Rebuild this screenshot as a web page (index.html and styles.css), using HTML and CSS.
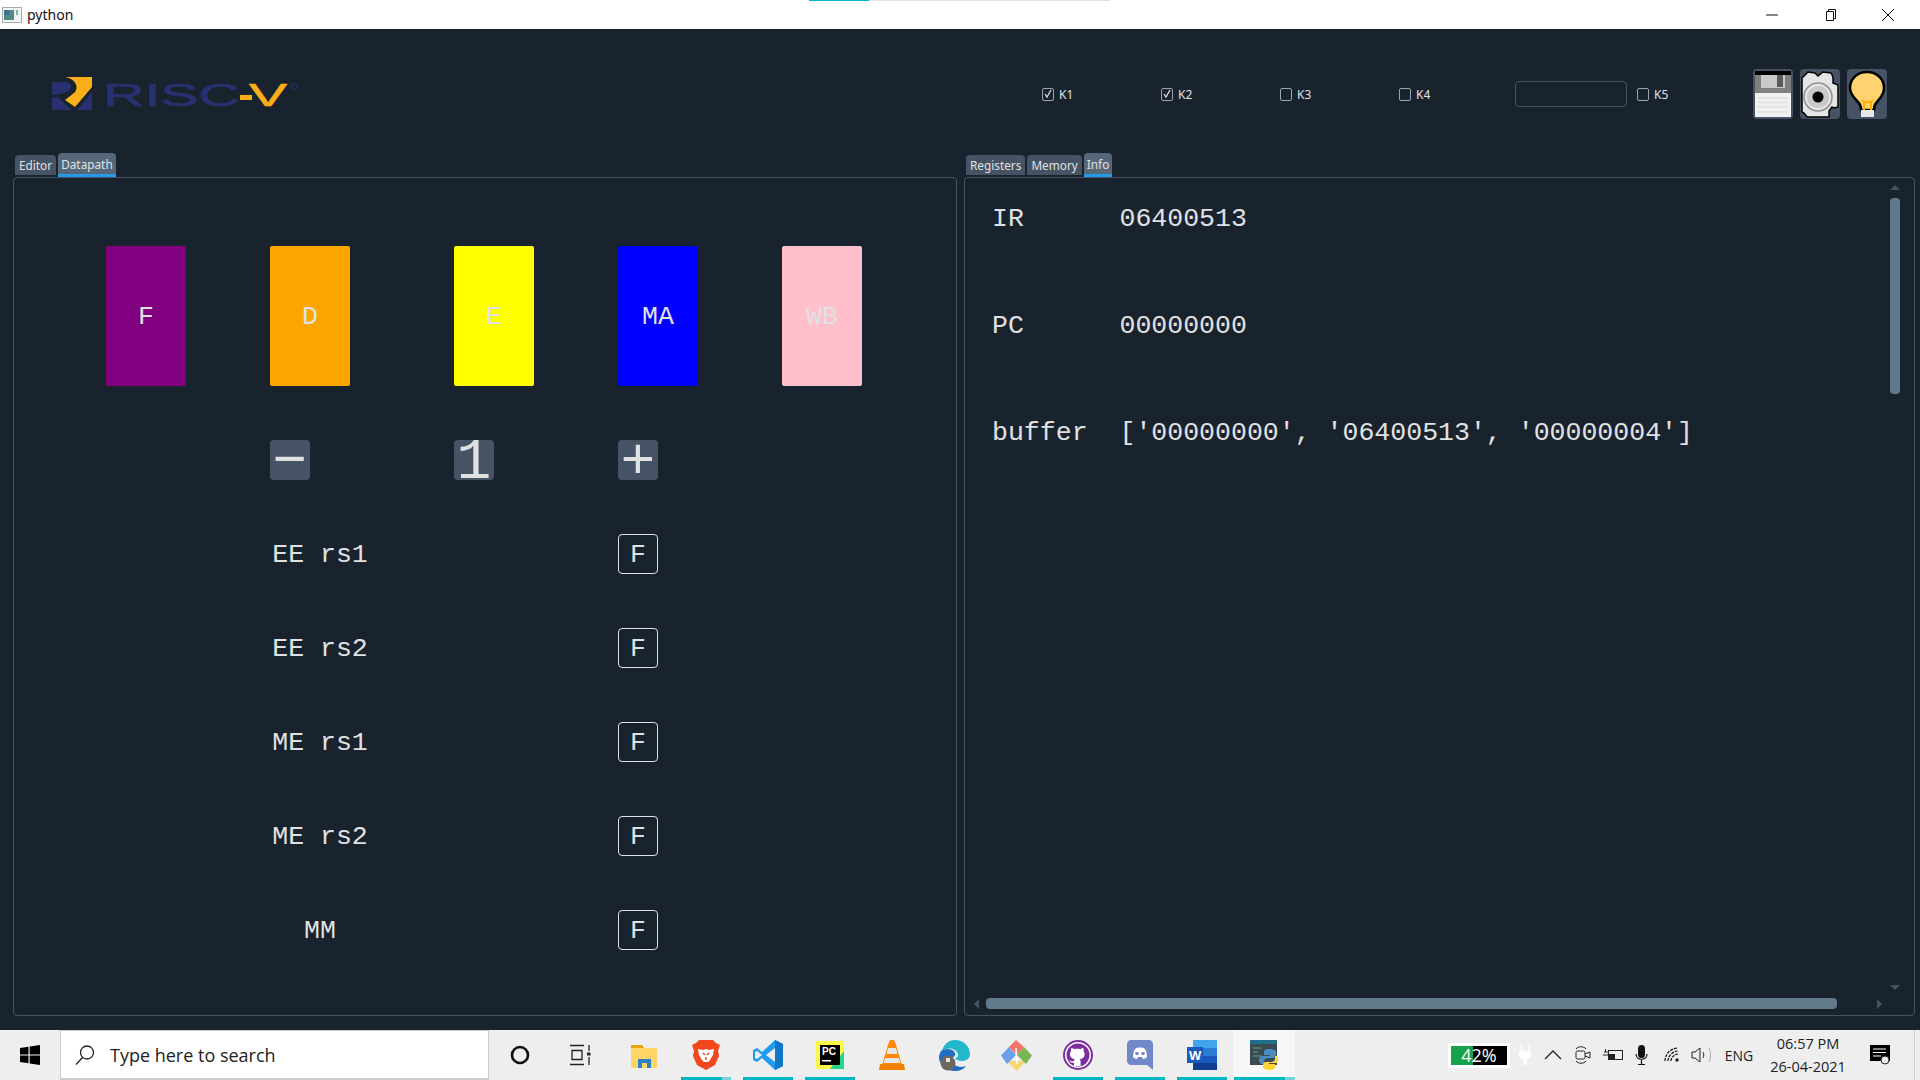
FILE: index.html
```html
<!DOCTYPE html>
<html lang="en">
<head>
    <meta charset="UTF-8">
    <title>python</title>
    <link rel="stylesheet" href="styles.css">
</head>
<body>
    <div class="titlebar">
        <div class="launch-strip"></div>
        <svg class="app-icon" width="20" height="16" viewBox="0 0 20 16">
            <rect x="0.5" y="0.5" width="19" height="15" fill="#f4f4f4" stroke="#a9a9a9"/>
            <rect x="2" y="3" width="10" height="10" fill="#4f8a86"/>
            <rect x="2" y="3" width="5" height="5" fill="#3c6f8f"/>
            <rect x="14" y="3" width="2" height="5" fill="#7db6a5"/>
        </svg>
        <span class="app-name">python</span>
        <div class="win-controls">
            <svg width="14" height="14" viewBox="0 0 14 14"><path d="M1 7h12" stroke="#111" fill="none"/></svg>
            <svg width="14" height="14" viewBox="0 0 14 14"><path d="M3.5 3.5h7v9h-7zM5.5 3.5v-2h7v9h-2" stroke="#111" fill="none"/></svg>
            <svg width="14" height="14" viewBox="0 0 14 14"><path d="M1 1l12 12M13 1L1 13" stroke="#111" fill="none"/></svg>
        </div>
    </div>

    <main class="app">
        <header class="topbar">
            <svg class="logo" width="250" height="40" viewBox="0 0 250 40">
                <g transform="translate(0 3)">
                    <path d="M0 5h14c6 0 7 8 1 10l-6 2-9 1z" fill="#27316f"/>
                    <path d="M0 21l6-1 13 13H0z" fill="#27316f"/>
                    <path d="M40 15v18H25z" fill="#27316f"/>
                    <path d="M13 0h27v10L23 30l-10-7 9-7c5-4 3-14-9-16z" fill="#f9ae1a"/>
                    <text class="logo-text" x="51" y="29" textLength="137" lengthAdjust="spacingAndGlyphs" fill="#27316f" stroke="#27316f">RISC</text>
                    <rect x="188" y="18" width="12" height="5" fill="#f9ae1a"/>
                    <text class="logo-text" x="197" y="29" textLength="38" lengthAdjust="spacingAndGlyphs" fill="#f9ae1a" stroke="#f9ae1a">V</text>
                    <circle cx="242" cy="9.5" r="3" fill="none" stroke="#27316f"/>
                </g>
            </svg>

            <div class="checks">
                <label class="check"><span class="box"><svg width="10" height="10" viewBox="0 0 10 10"><path d="M2 5l2 3 4-7" fill="none" stroke="#e0e1e3" stroke-width="1.3"/></svg></span>K1</label>
                <label class="check"><span class="box"><svg width="10" height="10" viewBox="0 0 10 10"><path d="M2 5l2 3 4-7" fill="none" stroke="#e0e1e3" stroke-width="1.3"/></svg></span>K2</label>
                <label class="check"><span class="box"></span>K3</label>
                <label class="check"><span class="box"></span>K4</label>
                <input class="field" type="text">
                <label class="check"><span class="box"></span>K5</label>
            </div>

            <div class="tools">
                <button class="tool">
                    <svg width="40" height="50" viewBox="0 0 40 50">
                        <rect x="2" y="2" width="36" height="46" fill="#808080"/>
                        <rect x="2" y="2" width="36" height="4" fill="#000"/>
                        <rect x="8" y="6" width="24" height="13" fill="#c9c9c9"/>
                        <rect x="24" y="6" width="6" height="12" fill="#5a5a5a"/>
                        <rect x="2" y="24" width="36" height="24" fill="#f1f1f1"/>
                        <path d="M5 29h30M5 33.500h30M5 38h30M5 43h30" stroke="#dedede" stroke-width="1.500"/>
                    </svg>
                </button>
                <button class="tool">
                    <svg width="40" height="50" viewBox="0 0 40 50">
                        <path d="M2 9l6-6 7 1 3 3 5-4 8 1 2 4v6l5 2v22l-4 1-2-1-3 4v6H7l-3-4-2-1z" fill="#e5e5e5" stroke="#000" stroke-width="1.500"/>
                        <circle cx="18" cy="28" r="14" fill="#e5e5e5" stroke="#8f8f8f" stroke-width="1.500"/>
                        <circle cx="18" cy="28" r="11" fill="#c9c9c9"/>
                        <circle cx="18" cy="28" r="5.500" fill="#000"/>
                    </svg>
                </button>
                <button class="tool">
                    <svg width="40" height="50" viewBox="0 0 40 50">
                        <path d="M20 3c10 0 17 7 17 16 0 7-4 10-7 14-2 2-3 4-3 8H14c0-4-1-6-3-8-3-4-8-7-8-14C3 10 10 3 20 3z" fill="#ffd470" stroke="#000" stroke-width="2.500"/>
                        <path d="M15 31l2 2h7l2-2M17 33v8M24 33v8" fill="none" stroke="#ffb000" stroke-width="2"/>
                        <rect x="14" y="41" width="13" height="7" fill="#e8e8e8"/>
                    </svg>
                </button>
            </div>
        </header>

        <div class="workspace">
            <section class="column column-left">
                <div class="tabs">
                    <div class="tab">Editor</div>
                    <div class="tab active">Datapath</div>
                </div>
                <div class="pane datapath">
                    <div class="stage stage-f col-1">F</div>
                    <div class="stage stage-d col-2">D</div>
                    <div class="stage stage-e col-3">E</div>
                    <div class="stage stage-ma col-4">MA</div>
                    <div class="stage stage-wb col-5">WB</div>

                    <button class="step col-2">&minus;</button>
                    <button class="step col-3">1</button>
                    <button class="step col-4">+</button>

                    <div class="fwd-label col-2">EE rs1</div>
                    <button class="fwd col-4">F</button>
                    <div class="fwd-label col-2">EE rs2</div>
                    <button class="fwd col-4">F</button>
                    <div class="fwd-label col-2">ME rs1</div>
                    <button class="fwd col-4">F</button>
                    <div class="fwd-label col-2">ME rs2</div>
                    <button class="fwd col-4">F</button>
                    <div class="fwd-label col-2">MM</div>
                    <button class="fwd col-4">F</button>
                </div>
            </section>

            <section class="column column-right">
                <div class="tabs">
                    <div class="tab">Registers</div>
                    <div class="tab">Memory</div>
                    <div class="tab active">Info</div>
                </div>
                <div class="pane info">
                    <div class="info-line">IR      06400513</div>
                    <div class="info-line">PC      00000000</div>
                    <div class="info-line">buffer  ['00000000', '06400513', '00000004']</div>

                    <div class="arrow arrow-up"></div>
                    <div class="thumb-v"></div>
                    <div class="arrow arrow-down"></div>
                    <div class="arrow arrow-left"></div>
                    <div class="thumb-h"></div>
                    <div class="arrow arrow-right"></div>
                </div>
            </section>
        </div>
    </main>

    <footer class="taskbar">
        <div class="start">
            <svg width="20" height="20" viewBox="0 0 20 20"><path d="M0 3l8.500-1.300v7.800H0zM9.700 1.500L20 0v9.500H9.700zM0 10.500h8.500v7.800L0 17zM9.700 10.500H20V20L9.700 18.500z" fill="#000"/></svg>
        </div>
        <div class="search">
            <svg width="20" height="22" viewBox="0 0 20 22"><circle cx="12" cy="8.500" r="6.500" fill="none" stroke="#222" stroke-width="1.300"/><path d="M7.500 13.500L1 20.500" stroke="#222" stroke-width="1.300"/></svg>
            <span>Type here to search</span>
        </div>

        <div class="tile"><svg width="20" height="20" viewBox="0 0 20 20"><circle cx="10" cy="10" r="8" fill="none" stroke="#111" stroke-width="2.600"/></svg></div>
        <div class="tile"><svg width="26" height="22" viewBox="0 0 26 22"><path d="M1 1.500h14M1 20.500h14M3 6.500h10v9H3zM20 1v6M20 13v8" fill="none" stroke="#222" stroke-width="1.300"/><rect x="18" y="8.500" width="3.500" height="3" fill="#222"/></svg></div>
        <div class="tile">
            <svg width="28" height="28" viewBox="0 0 28 28">
                <path d="M1 4h11l2 3h13v20H1z" fill="#ffd566"/>
                <path d="M1 4h11l2 3H1z" fill="#e5a505"/>
                <path d="M8 27V18h13v9h-4v-5h-5v5z" fill="#2c82c9"/>
            </svg>
        </div>
        <div class="tile running multi">
            <svg width="28" height="30" viewBox="0 0 28 30">
                <path d="M7 0h14l3 3 4 2-2 6 1 5-4 9-9 5-9-5-4-9 1-5-2-6 4-2z" fill="#f1471d"/>
                <path d="M6 9l5 1 3-1 3 1 5-1-1 6-3 5-2 2h-4l-2-2-3-5z" fill="#fff"/>
                <path d="M11 13l2 2M17 13l-2 2M14 17v3" stroke="#f1471d" stroke-width="1.500"/>
            </svg>
        </div>
        <div class="tile running">
            <svg width="30" height="30" viewBox="0 0 30 30">
                <path d="M22 0l8 4v22l-8 4-13-12-5 4-4-2V10l4-2 5 4z" fill="#1f9cf0"/>
                <path d="M22 8v14l-9-7z" fill="#eeeeee"/>
                <path d="M22 0v30l8-4V4z" fill="#0e78c6"/>
                <path d="M4 11l5 4-5 4-2-1v-6z" fill="#eeeeee"/>
            </svg>
        </div>
        <div class="tile running">
            <svg width="28" height="28" viewBox="0 0 28 28">
                <path d="M0 0h28v28H0z" fill="#21d789"/>
                <path d="M0 0h28v10L14 28H0z" fill="#fcf84a"/>
                <rect x="4" y="4" width="20" height="20" fill="#000"/>
                <text class="pc-text" x="6" y="14" fill="#fff">PC</text>
                <rect x="6" y="19" width="9" height="1.500" fill="#fff"/>
            </svg>
        </div>
        <div class="tile">
            <svg width="26" height="30" viewBox="0 0 26 30">
                <path d="M9 5L11 0h4l2 5 6 20H3z" fill="#ff8800"/>
                <path d="M9 8h8l1.500 6h-11zM6 18h14l1.500 5h-17z" fill="#e6e6e6"/>
                <path d="M1 24h24l1 6H0z" fill="#f08000"/>
            </svg>
        </div>
        <div class="tile">
            <svg width="31" height="31" viewBox="0 0 31 31">
                <path d="M3 11C5 3 11 0 16 0c9 0 15 7 15 14 0 4-3 7-8 7-3 0-6-1-7-3 3 0 4-3 2-6-3-4-9-5-15-1z" fill="#21b8c9"/>
                <path d="M2 11c4-3 12-3 14 2 1 2-1 4-3 5-1 5 4 9 9 9 2 0 4-1 5-1-3 4-7 5-11 5C7 31 0 25 0 17c0-2 1-4 2-6z" fill="#1d6fc4"/>
                <circle cx="9" cy="23" r="7.500" fill="#6e675f"/>
                <rect x="7" y="18" width="4" height="4" fill="#e8e3d6"/>
            </svg>
        </div>
        <div class="tile">
            <svg width="31" height="31" viewBox="0 0 31 31">
                <path d="M15.500 31L6 21h19z" fill="#f7d774"/>
                <path d="M0 15.500L8 7l7 8-9 9z" fill="#6d9eeb"/>
                <path d="M31 15.500L23 7l-7 8 9 9z" fill="#76b852"/>
                <path d="M15 0l8 7-7 8-8-8z" fill="#f0766b"/>
                <path d="M15 8l1 16" stroke="#fff" stroke-width="1.500"/>
            </svg>
        </div>
        <div class="tile running">
            <svg width="30" height="30" viewBox="0 0 30 30">
                <circle cx="15" cy="15" r="14" fill="#fff" stroke="#7b2f9e" stroke-width="2"/>
                <circle cx="15" cy="15" r="11.500" fill="#7b2f9e"/>
                <path d="M11 26v-3c-3 0-4-1-5-3 2 1 3 2 5 1 0-1 0-1 1-2-3 0-5-2-5-5 0-1 .500-2 1-3-.200-1 0-2 .300-3 1 0 2 .500 3 1.200 2-.500 4-.500 6 0 1-.700 2-1.200 3-1.200.300 1 .500 2 .300 3 .500 1 1 2 1 3 0 3-2 5-5 5 1 1 1 2 1 3v4z" fill="#fff"/>
            </svg>
        </div>
        <div class="tile running">
            <svg width="26" height="30" viewBox="0 0 26 30">
                <path d="M4 0h18c2 0 4 2 4 4v26l-6-5H4c-2 0-4-2-4-4V4c0-2 2-4 4-4z" fill="#7289c9"/>
                <path d="M6 17c0-4 1-7 3-9l3-.500h2l3 .500c2 2 3 5 3 9-1 1-3 2-4 2l-1-2h-4l-1 2c-1 0-3-1-4-2z" fill="#fff"/>
                <circle cx="10" cy="13.500" r="1.800" fill="#7289c9"/>
                <circle cx="16" cy="13.500" r="1.800" fill="#7289c9"/>
            </svg>
        </div>
        <div class="tile running">
            <svg width="30" height="30" viewBox="0 0 30 30">
                <rect x="6" y="0" width="24" height="8" fill="#41a5ee"/>
                <rect x="6" y="8" width="24" height="8" fill="#2b7cd3"/>
                <rect x="6" y="16" width="24" height="7" fill="#185abd"/>
                <rect x="6" y="23" width="24" height="7" fill="#103f91"/>
                <rect x="0" y="7" width="16" height="16" fill="#185abd"/>
                <text class="word-text" x="2" y="20" fill="#fff">W</text>
            </svg>
        </div>
        <div class="tile running current">
            <svg width="28" height="30" viewBox="0 0 28 30">
                <rect x="0" y="0" width="27" height="25" fill="#3b4a54"/>
                <rect x="0" y="0" width="27" height="4" fill="#1f6f8b"/>
                <path d="M3 8h8M3 12h5M3 16h9" stroke="#52b36b" stroke-width="1"/>
                <path d="M19 9c-4 0-5 1-5 3v3h6v1h-8c-2 0-3 2-3 4s1 4 3 4h2v-3c0-2 2-3 4-3h5c2 0 3-1 3-3v-3c0-2-3-3-7-3z" fill="#4b8bbe"/>
                <path d="M20 30c4 0 5-1 5-3v-3h-6v-1h8c1 0 1-2 1-4s-1-3-1-3h-2v3c0 2-2 3-4 3h-5c-2 0-3 1-3 3v2c0 2 3 3 7 3z" fill="#ffd43b"/>
            </svg>
        </div>

        <div class="tray">
            <div class="battery-meter"><span class="charge"></span><span class="charge-text">42%</span></div>
            <div class="tray-item w-29"><svg width="12" height="20" viewBox="0 0 12 20"><path d="M2 0v6M10 0v6M0 6h12v5l-3 3H7v6H5v-6H3l-3-3z" fill="#fff" stroke="#fff" stroke-width="1"/></svg></div>
            <div class="tray-item w-28"><svg width="18" height="10" viewBox="0 0 18 10"><path d="M1 9l8-8 8 8" fill="none" stroke="#222" stroke-width="1.300"/></svg></div>
            <div class="tray-item w-31"><svg width="16" height="20" viewBox="0 0 16 20"><rect x="1" y="6" width="9" height="8" rx="1.500" fill="none" stroke="#222"/><path d="M10 9l5-2v6l-5-2M1 4c2-3 8-3 10 0M1 16c2 3 8 3 10 0" fill="none" stroke="#222"/></svg></div>
            <div class="tray-item w-29"><svg width="20" height="14" viewBox="0 0 20 14"><rect x="5.500" y="2.500" width="14" height="9" fill="none" stroke="#222"/><rect x="6" y="6" width="6" height="5" fill="#222"/><path d="M1 4h4M2.500 1v3M0 7h5" stroke="#222"/></svg></div>
            <div class="tray-item w-29"><svg width="13" height="20" viewBox="0 0 13 20"><rect x="3" y="0" width="7" height="13" rx="3.500" fill="#111"/><path d="M1 9c0 7 11 7 11 0M6.500 15v4M3 19.500h7" fill="none" stroke="#111" stroke-width="1.200"/></svg></div>
            <div class="tray-item w-31"><svg width="16" height="16" viewBox="0 0 16 16"><path d="M1 14C1 7 7 1 14 1M4 14c0-5 5-10 10-10M7 14c0-3 3-7 7-7" fill="none" stroke="#111" stroke-width="1.200" stroke-dasharray="3 1"/><circle cx="13" cy="13" r="1.700" fill="#222"/></svg></div>
            <div class="tray-item w-27"><svg width="20" height="16" viewBox="0 0 20 16"><path d="M1 5h3l5-4v14l-5-4H1z" fill="none" stroke="#222"/><path d="M12 5c1 2 1 4 0 6" fill="none" stroke="#222"/><path d="M18 1c2 4 2 10 0 14" fill="none" stroke="#aaa"/></svg></div>
            <div class="lang">ENG</div>
            <div class="clock"><span>06:57 PM</span><span>26-04-2021</span></div>
            <div class="tray-item w-56"><svg width="22" height="20" viewBox="0 0 22 20"><path d="M1 0h20v16H1z" fill="#000"/><path d="M4 4h13M4 7.500h13M4 11h8" stroke="#fff"/><circle cx="16" cy="15" r="4" fill="#eee" stroke="#222"/></svg></div>
            <div class="tray-edge"></div>
        </div>
    </footer>
</body>
</html>
```

FILE: styles.css
```css
/* General Styles */
* {
    box-sizing: border-box;
}

body {
    margin: 0;
    width: 1920px;
    height: 1080px;
    display: flex;
    flex-direction: column;
    overflow: hidden;
    background-color: #19232d;
    color: #e0e1e3;
    font-family: 'Noto Sans', sans-serif;
}

button {
    padding: 0;
    border: none;
    background: none;
    color: inherit;
    font: inherit;
}

/* Title bar */
.titlebar {
    position: relative;
    height: 29px;
    flex-shrink: 0;
    display: flex;
    align-items: center;
    background-color: #fff;
    color: #111;
}

.launch-strip {
    position: absolute;
    top: 0;
    left: 809px;
    width: 301px;
    height: 1px;
    background: linear-gradient(to right, #00b7c3 60px, #e2e2e2 60px);
}

.app-icon {
    margin-left: 2px;
}

.app-name {
    margin-left: 5px;
    font-size: 14px;
}

.win-controls {
    margin-left: auto;
    padding-right: 25px;
    display: flex;
    gap: 44px;
}

/* Main window */
.app {
    flex: 1;
    display: flex;
    flex-direction: column;
}

.topbar {
    display: flex;
    align-items: center;
    height: 124px;
    padding: 40px 33px 34px 52px;
}

.logo-text {
    font-family: 'Liberation Sans', sans-serif;
    font-size: 32px;
    stroke-width: 0.6;
}

.checks {
    margin-left: 740px;
    display: grid;
    grid-template-columns: 119px 119px 119px 116px 122px auto;
    align-items: center;
}

.check {
    display: flex;
    align-items: center;
    gap: 5px;
    font-size: 12px;
}

.box {
    width: 12px;
    height: 13px;
    display: flex;
    align-items: center;
    justify-content: center;
    border: 1px solid #9aa5b1;
    border-radius: 2px;
}

.field {
    width: 112px;
    height: 26px;
    background: none;
    border: 1px solid #455364;
    border-radius: 4px;
}

.tools {
    margin-left: auto;
    display: flex;
    gap: 7px;
}

.tool {
    width: 40px;
    height: 50px;
    background-color: #455364;
    border-radius: 4px;
}

.tool svg {
    display: block;
}

/* Panes */
.workspace {
    flex: 1;
    display: flex;
    gap: 7px;
    padding: 0 5px 14px 13px;
}

.column {
    display: flex;
    flex-direction: column;
}

.column-left {
    width: 944px;
}

.column-right {
    width: 951px;
}

.tabs {
    height: 24px;
    flex-shrink: 0;
    display: flex;
    align-items: flex-end;
    gap: 2px;
    padding-left: 2px;
}

.tab {
    height: 20px;
    margin-bottom: 2px;
    padding: 0 4px;
    display: flex;
    align-items: center;
    background-color: #455364;
    border-radius: 4px 4px 0 0;
    font-size: 11.8px;
}

.tab.active {
    height: 24px;
    margin-bottom: 0;
    padding: 0 3px;
    background-color: #54687a;
    border-bottom: 3px solid #259ae9;
}

.pane {
    flex: 1;
    border: 1px solid #455364;
    border-radius: 4px;
    font-family: 'Liberation Mono', monospace;
    font-size: 26.55px;
}

/* Datapath tab */
.datapath {
    display: grid;
    grid-template-columns: 164px 184px 164px 164px 80px;
    grid-auto-rows: min-content;
    row-gap: 54px;
    padding: 68px 0 0 92px;
}

.col-1 { grid-column: 1; }
.col-2 { grid-column: 2; }
.col-3 { grid-column: 3; }
.col-4 { grid-column: 4; }
.col-5 { grid-column: 5; }

.stage {
    grid-row: 1;
    width: 80px;
    height: 140px;
    padding-top: 2px;
    display: flex;
    align-items: center;
    justify-content: center;
    border-radius: 2px;
}

.stage-f { background-color: #800080; }
.stage-d { background-color: #ffa500; }
.stage-e { background-color: #ffff00; }
.stage-ma { background-color: #0000ff; }
.stage-wb { background-color: #ffc0cb; }

.step {
    grid-row: 2;
    width: 40px;
    height: 40px;
    padding-top: 6px;
    display: flex;
    align-items: center;
    justify-content: center;
    background-color: #455364;
    border-radius: 4px;
    font-size: 58px;
    line-height: 40px;
}

.fwd-label {
    width: 100px;
    height: 40px;
    line-height: 42px;
    text-align: center;
    white-space: pre;
}

.fwd {
    width: 40px;
    height: 40px;
    padding-top: 1px;
    border: 1px solid #e0e1e3;
    border-radius: 4px;
}

/* Info tab */
.info {
    position: relative;
    display: flex;
    flex-direction: column;
    gap: 75px;
    padding: 25px 0 0 27px;
}

.info-line {
    height: 32px;
    line-height: 32px;
    white-space: pre;
}

.thumb-v {
    position: absolute;
    top: 20px;
    left: 925px;
    width: 10px;
    height: 196px;
    background-color: #60798b;
    border-radius: 4px;
}

.thumb-h {
    position: absolute;
    top: 820px;
    left: 21px;
    width: 851px;
    height: 11px;
    background-color: #60798b;
    border-radius: 4px;
}

.arrow {
    position: absolute;
    width: 0;
    height: 0;
    border: 5px solid transparent;
}

.arrow-up {
    top: 7px;
    left: 925px;
    border-top-width: 0;
    border-bottom-color: #455364;
}

.arrow-down {
    top: 807px;
    left: 925px;
    border-bottom-width: 0;
    border-top-color: #455364;
}

.arrow-left {
    top: 821px;
    left: 9px;
    border-left-width: 0;
    border-right-color: #455364;
}

.arrow-right {
    top: 821px;
    left: 912px;
    border-right-width: 0;
    border-left-color: #455364;
}

/* Windows taskbar */
.taskbar {
    height: 50px;
    flex-shrink: 0;
    display: flex;
    background-color: #eeeeee;
    color: #222;
    font-family: 'Open Sans', sans-serif;
}

.start {
    width: 60px;
    display: flex;
    align-items: center;
    justify-content: center;
}

.search {
    width: 429px;
    display: flex;
    align-items: center;
    gap: 15px;
    padding-left: 14px;
    background-color: #fff;
    border: 1px solid #cccccc;
    border-bottom-width: 2px;
    font-size: 18px;
}

.tile {
    position: relative;
    width: 62px;
    display: flex;
    align-items: center;
    justify-content: center;
}

.tile.running::after {
    content: "";
    position: absolute;
    left: 6px;
    right: 6px;
    bottom: 0;
    height: 3px;
    background-color: #00b7c3;
}

.tile.multi::after {
    background: linear-gradient(to right, #00b7c3 41px, #74d4da 41px);
}

.tile.current {
    background-color: #f7f7f7;
}

.tile.current::after {
    left: 1px;
    right: 0;
    background: linear-gradient(to right, #00b7c3 51px, #74d4da 51px);
}

.pc-text {
    font-family: 'Liberation Sans', sans-serif;
    font-size: 10px;
    font-weight: bold;
}

.word-text {
    font-family: 'Liberation Sans', sans-serif;
    font-size: 13px;
    font-weight: bold;
}

.tray {
    margin-left: auto;
    display: flex;
    align-items: center;
}

.battery-meter {
    position: relative;
    width: 62px;
    height: 25px;
    display: flex;
    align-items: center;
    justify-content: center;
    background-color: #000;
    border: 3px solid #fff;
    color: #fff;
    font-size: 18px;
}

.charge {
    position: absolute;
    left: 0;
    top: 0;
    bottom: 0;
    width: 22px;
    background-color: #16a34a;
}

.charge-text {
    position: relative;
}

.tray-item {
    height: 50px;
    display: flex;
    align-items: center;
    justify-content: center;
}

.w-27 { width: 27px; }
.w-28 { width: 28px; }
.w-29 { width: 29px; }
.w-31 { width: 31px; }
.w-56 { width: 56px; }

.lang {
    width: 50px;
    text-align: center;
    font-size: 14px;
}

.clock {
    width: 88px;
    display: flex;
    flex-direction: column;
    align-items: center;
    gap: 4px;
    font-size: 14.5px;
    line-height: 19px;
}

.tray-edge {
    width: 1px;
    height: 50px;
    margin: 0 5px 0 6px;
    background-color: #d0d0d0;
}
```
